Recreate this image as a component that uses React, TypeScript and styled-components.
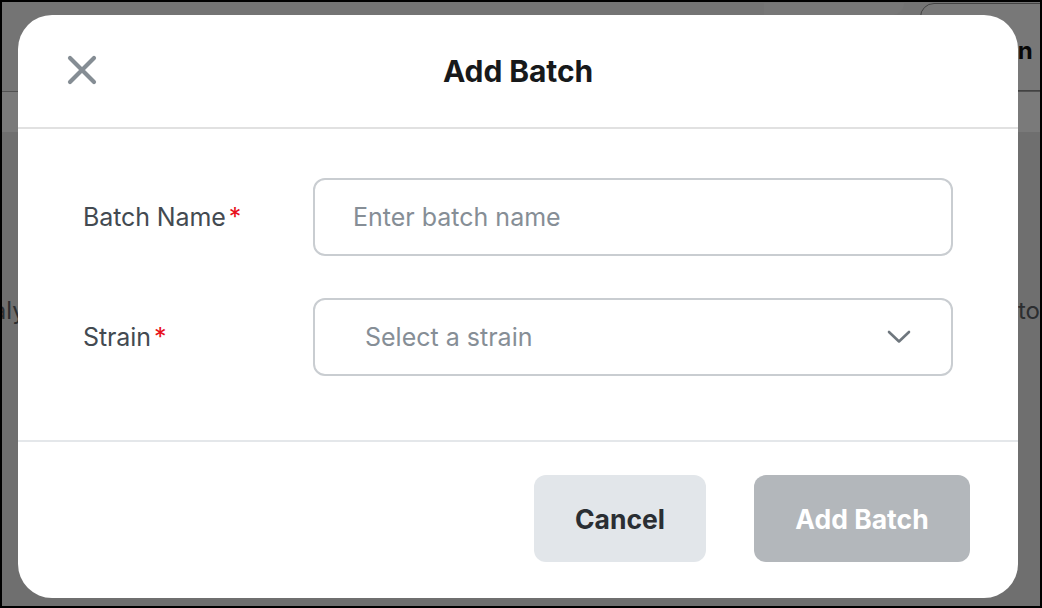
import React from "react";
import styled, { createGlobalStyle } from "styled-components";

const GlobalStyle = createGlobalStyle`
  html, body { margin: 0; padding: 0; }
  body { font-family: Inter, "Noto Sans", sans-serif; overflow: hidden; }
  * { box-sizing: border-box; }
`;

const Frame = styled.div`
  position: relative;
  width: 1042px;
  height: 608px;
  border: 2px solid #000;
  overflow: hidden;
  background: #e9e9e9;
`;

const Page = styled.div`
  display: flex;
  flex-direction: column;
  height: 100%;
`;

const PageHeader = styled.header`
  height: 90px;
  background: #f3f3f3;
  border-bottom: 1px solid #a9a9a9;
  display: flex;
  justify-content: flex-end;
  align-items: flex-start;
  padding-top: 1px;
  gap: 16px;
`;

const GhostTab = styled.div`
  width: 140px;
  height: 12px;
  border-radius: 0 0 12px 0;
  background: #f8f8f8;
`;

const HeaderButton = styled.div`
  width: 150px;
  height: 88px;
  margin-right: -30px;
  border: 1px solid #8a8a8a;
  border-radius: 14px;
  background: #fafafa;
  display: flex;
  align-items: center;
  padding-left: 32px;
  padding-top: 6px;
  font-size: 24px;
  font-weight: 700;
  color: #111;
  white-space: nowrap;
`;

const Band = styled.div`
  height: 40px;
  background: #ffffff;
`;

const PageBody = styled.div`
  flex: 1;
  display: flex;
  justify-content: space-between;
  align-items: flex-start;
  padding-top: 164px;
  font-size: 24px;
  color: #5c6065;
  white-space: nowrap;
`;

const EdgeText = styled.span<{ $side: "left" | "right" }>`
  margin-left: ${(p) => (p.$side === "left" ? "-40px" : "0")};
`;

const Overlay = styled.div`
  position: absolute;
  inset: 0;
  background: rgba(0, 0, 0, 0.52);
  display: flex;
  align-items: flex-start;
  padding: 13px 22px 8px 16px;
`;

const Modal = styled.div`
  width: 1000px;
  height: 583px;
  background: #fff;
  border-radius: 34px;
  display: flex;
  flex-direction: column;
  overflow: hidden;
`;

const ModalHeader = styled.div`
  height: 114px;
  border-bottom: 2px solid #e1e1e1;
  display: grid;
  grid-template-columns: 1fr auto 1fr;
  align-items: center;
  padding: 0 49px;
`;

const CloseButton = styled.button`
  justify-self: start;
  width: 30px;
  height: 30px;
  padding: 0;
  border: none;
  background: none;
  display: flex;
  margin-top: -2px;
  cursor: pointer;
`;

const Title = styled.h2`
  margin: 0;
  font-size: 30px;
  font-weight: 700;
  color: #17191b;
  letter-spacing: -0.1px;
`;

const ModalBody = styled.div`
  padding: 49px 65px 64px;
  display: flex;
  flex-direction: column;
  gap: 42px;
`;

const FieldRow = styled.div`
  display: grid;
  grid-template-columns: 230px 1fr;
  align-items: center;
`;

const Label = styled.label`
  font-size: 25px;
  color: #434a51;
  letter-spacing: -0.1px;
`;

const Required = styled.span`
  color: #e8101a;
  margin-left: 3px;
`;

const TextInput = styled.input`
  height: 78px;
  width: 100%;
  border: 2px solid #c9cdd1;
  border-radius: 12px;
  padding: 0 0 0 38px;
  font-family: Inter, "Noto Sans", sans-serif;
  font-size: 25px;
  color: #222;
  outline: none;
  &::placeholder { color: #868e96; }
`;

const SelectBox = styled.div`
  height: 78px;
  border: 2px solid #c9cdd1;
  border-radius: 12px;
  display: flex;
  align-items: center;
  justify-content: space-between;
  padding: 0 40px 0 50px;
  font-size: 25px;
  color: #868e96;
`;

const ModalFooter = styled.div`
  border-top: 2px solid #e4e7ea;
  padding: 33px 48px 36px;
  display: flex;
  justify-content: flex-end;
  gap: 48px;
`;

const Button = styled.button<{ $variant: "secondary" | "primary"; $width: number }>`
  width: ${(p) => p.$width}px;
  height: 87px;
  border: none;
  border-radius: 12px;
  font-family: Inter, "Noto Sans", sans-serif;
  font-size: 26.5px;
  font-weight: 700;
  background: ${(p) => (p.$variant === "secondary" ? "#e2e6ea" : "#b3b7bb")};
  color: ${(p) => (p.$variant === "secondary" ? "#2a2e33" : "#ffffff")};
`;

export default function App() {
  return (
    <>
      <GlobalStyle />
      <Frame>
        <Page>
          <PageHeader>
            <GhostTab />
            <HeaderButton>Sign In</HeaderButton>
          </PageHeader>
          <Band />
          <PageBody>
            <EdgeText $side="left">Analy</EdgeText>
            <EdgeText $side="right">to</EdgeText>
          </PageBody>
        </Page>
        <Overlay>
          <Modal>
            <ModalHeader>
              <CloseButton aria-label="Close">
                <svg width="30" height="30" viewBox="0 0 30 30" fill="none">
                  <path d="M3 3 L27 27 M27 3 L3 27" stroke="#858d94" strokeWidth="4.2" strokeLinecap="round" />
                </svg>
              </CloseButton>
              <Title>Add Batch</Title>
              <span />
            </ModalHeader>
            <ModalBody>
              <FieldRow>
                <Label>
                  Batch Name<Required>*</Required>
                </Label>
                <TextInput placeholder="Enter batch name" />
              </FieldRow>
              <FieldRow>
                <Label>
                  Strain<Required>*</Required>
                </Label>
                <SelectBox>
                  <span>Select a strain</span>
                  <svg width="24" height="14" viewBox="0 0 24 14" fill="none">
                    <path d="M2 2 L12 11.5 L22 2" stroke="#6f777e" strokeWidth="2.6" strokeLinecap="round" strokeLinejoin="round" />
                  </svg>
                </SelectBox>
              </FieldRow>
            </ModalBody>
            <ModalFooter>
              <Button $variant="secondary" $width={172}>Cancel</Button>
              <Button $variant="primary" $width={216} disabled>Add Batch</Button>
            </ModalFooter>
          </Modal>
        </Overlay>
      </Frame>
    </>
  );
}
